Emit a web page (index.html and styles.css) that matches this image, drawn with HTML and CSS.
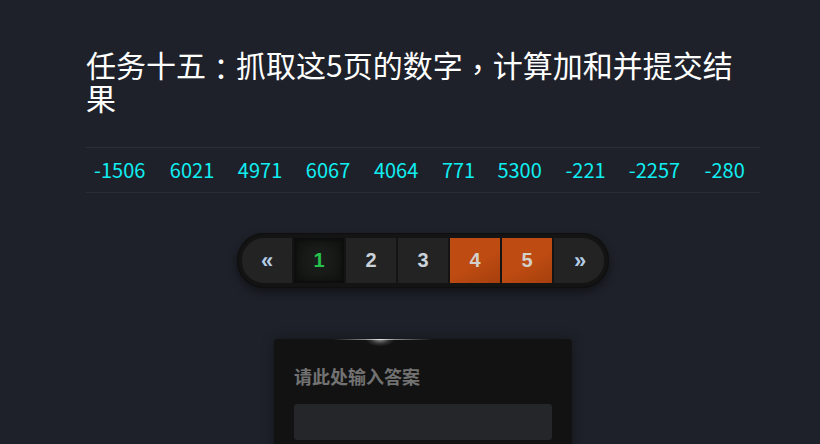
FILE: index.html
```html
<!DOCTYPE html>
<html lang="zh-CN">
<head>
<meta charset="utf-8">
<title>任务十五</title>
<link rel="stylesheet" href="styles.css">
</head>
<body>
<div class="container">
  <h2 class="title">任务十五<span class="punct" lang="zh-TW">：</span>抓取这5页的数字<span class="punct" lang="zh-TW">，</span>计算加和并提交结果</h2>
  <table class="nums">
    <tr>
      <td>-1506</td><td>6021</td><td>4971</td><td>6067</td><td>4064</td><td>771</td><td>5300</td><td>-221</td><td>-2257</td><td>-280</td>
    </tr>
  </table>
  <div class="pager-wrap">
    <ul class="pager">
      <li class="pg first">«</li>
      <li class="pg active">1</li>
      <li class="pg">2</li>
      <li class="pg">3</li>
      <li class="pg hot">4</li>
      <li class="pg hot">5</li>
      <li class="pg last">»</li>
    </ul>
  </div>
  <div class="card">
    <div class="label">请此处输入答案</div>
    <input class="answer" type="text">
  </div>
</div>
</body>
</html>
```
FILE: styles.css
```css
html, body {
  margin: 0;
  padding: 0;
  background: #1e2129;
  height: 100%;
  overflow: hidden;
}
body {
  font-family: "Noto Sans CJK SC", "Liberation Sans", sans-serif;
  color: #fff;
}
.container {
  width: 674px;
  margin-left: 86px;
}
.title {
  font-size: 30px;
  line-height: 33px;
  font-weight: normal;
  margin: 48px 0 33px 0;
  color: #fff;
}
.punct {
  font-family: "Noto Sans CJK TC", "Noto Sans CJK SC", sans-serif;
  line-height: 0;
  vertical-align: -3px;
}
.nums {
  width: 100%;
  border-collapse: collapse;
  margin: 0;
}
.nums td {
  padding: 8px;
  font-size: 20px;
  line-height: 28px;
  color: #10eef2;
  border-top: 1px solid #2c2f36;
  border-bottom: 1px solid #2a2d34;
  text-align: left;
}
.pager-wrap {
  display: flex;
  justify-content: center;
  padding-top: 40px;
}
.pager {
  list-style: none;
  margin: 0;
  padding: 5px;
  display: flex;
  gap: 2px;
  background: #141414;
  border-radius: 28px;
  box-shadow: 0 4px 10px rgba(0, 0, 0, 0.45), inset 0 0 2px rgba(0, 0, 0, 0.8);
}
.pg {
  width: 50px;
  height: 45px;
  display: flex;
  align-items: center;
  justify-content: center;
  background: #232323;
  color: #c9d1da;
  font-family: "Liberation Sans", Arial, sans-serif;
  font-weight: bold;
  font-size: 20px;
}
.pg.first {
  border-radius: 22px 0 0 22px;
  color: #b4cde6;
  font-size: 22px;
}
.pg.last {
  border-radius: 0 22px 22px 0;
  color: #b4cde6;
  font-size: 22px;
  padding-left: 2px;
  box-sizing: border-box;
}
.pg.active {
  background: radial-gradient(circle at 50% 50%, #1c201d 0%, #121412 80%);
  color: #27c24c;
  box-shadow: inset 0 0 0 1px #0d0d0d, inset 0 0 6px rgba(0, 0, 0, 0.8);
}
.pg.hot {
  background: linear-gradient(150deg, #bd4b12 55%, #a63f0d 100%);
  color: #d3d0cc;
}
.card {
  position: relative;
  width: 298px;
  box-sizing: border-box;
  margin: 51px auto 0 auto;
  padding: 24px 20px 20px 20px;
  background: #121212;
  border-radius: 4px;
  box-shadow: 0 0 12px rgba(0, 0, 0, 0.35);
}
.card::before {
  content: "";
  position: absolute;
  top: 0;
  left: 59px;
  width: 99px;
  height: 1px;
  background: linear-gradient(to right, rgba(255,255,255,0), rgba(255,255,255,0.75) 47%, rgba(255,255,255,0));
}
.card::after {
  content: "";
  position: absolute;
  top: 0;
  left: 92px;
  width: 28px;
  height: 7px;
  background: radial-gradient(ellipse at 50% 0%, rgba(255,255,255,0.55) 0%, rgba(255,255,255,0.15) 45%, rgba(255,255,255,0) 75%);
}
.label {
  font-size: 18px;
  line-height: 26px;
  font-weight: bold;
  color: #727272;
  margin-bottom: 15px;
}
.answer {
  display: block;
  width: 100%;
  box-sizing: border-box;
  height: 36px;
  border: none;
  border-radius: 3px;
  background: #252629;
  outline: none;
}
```
